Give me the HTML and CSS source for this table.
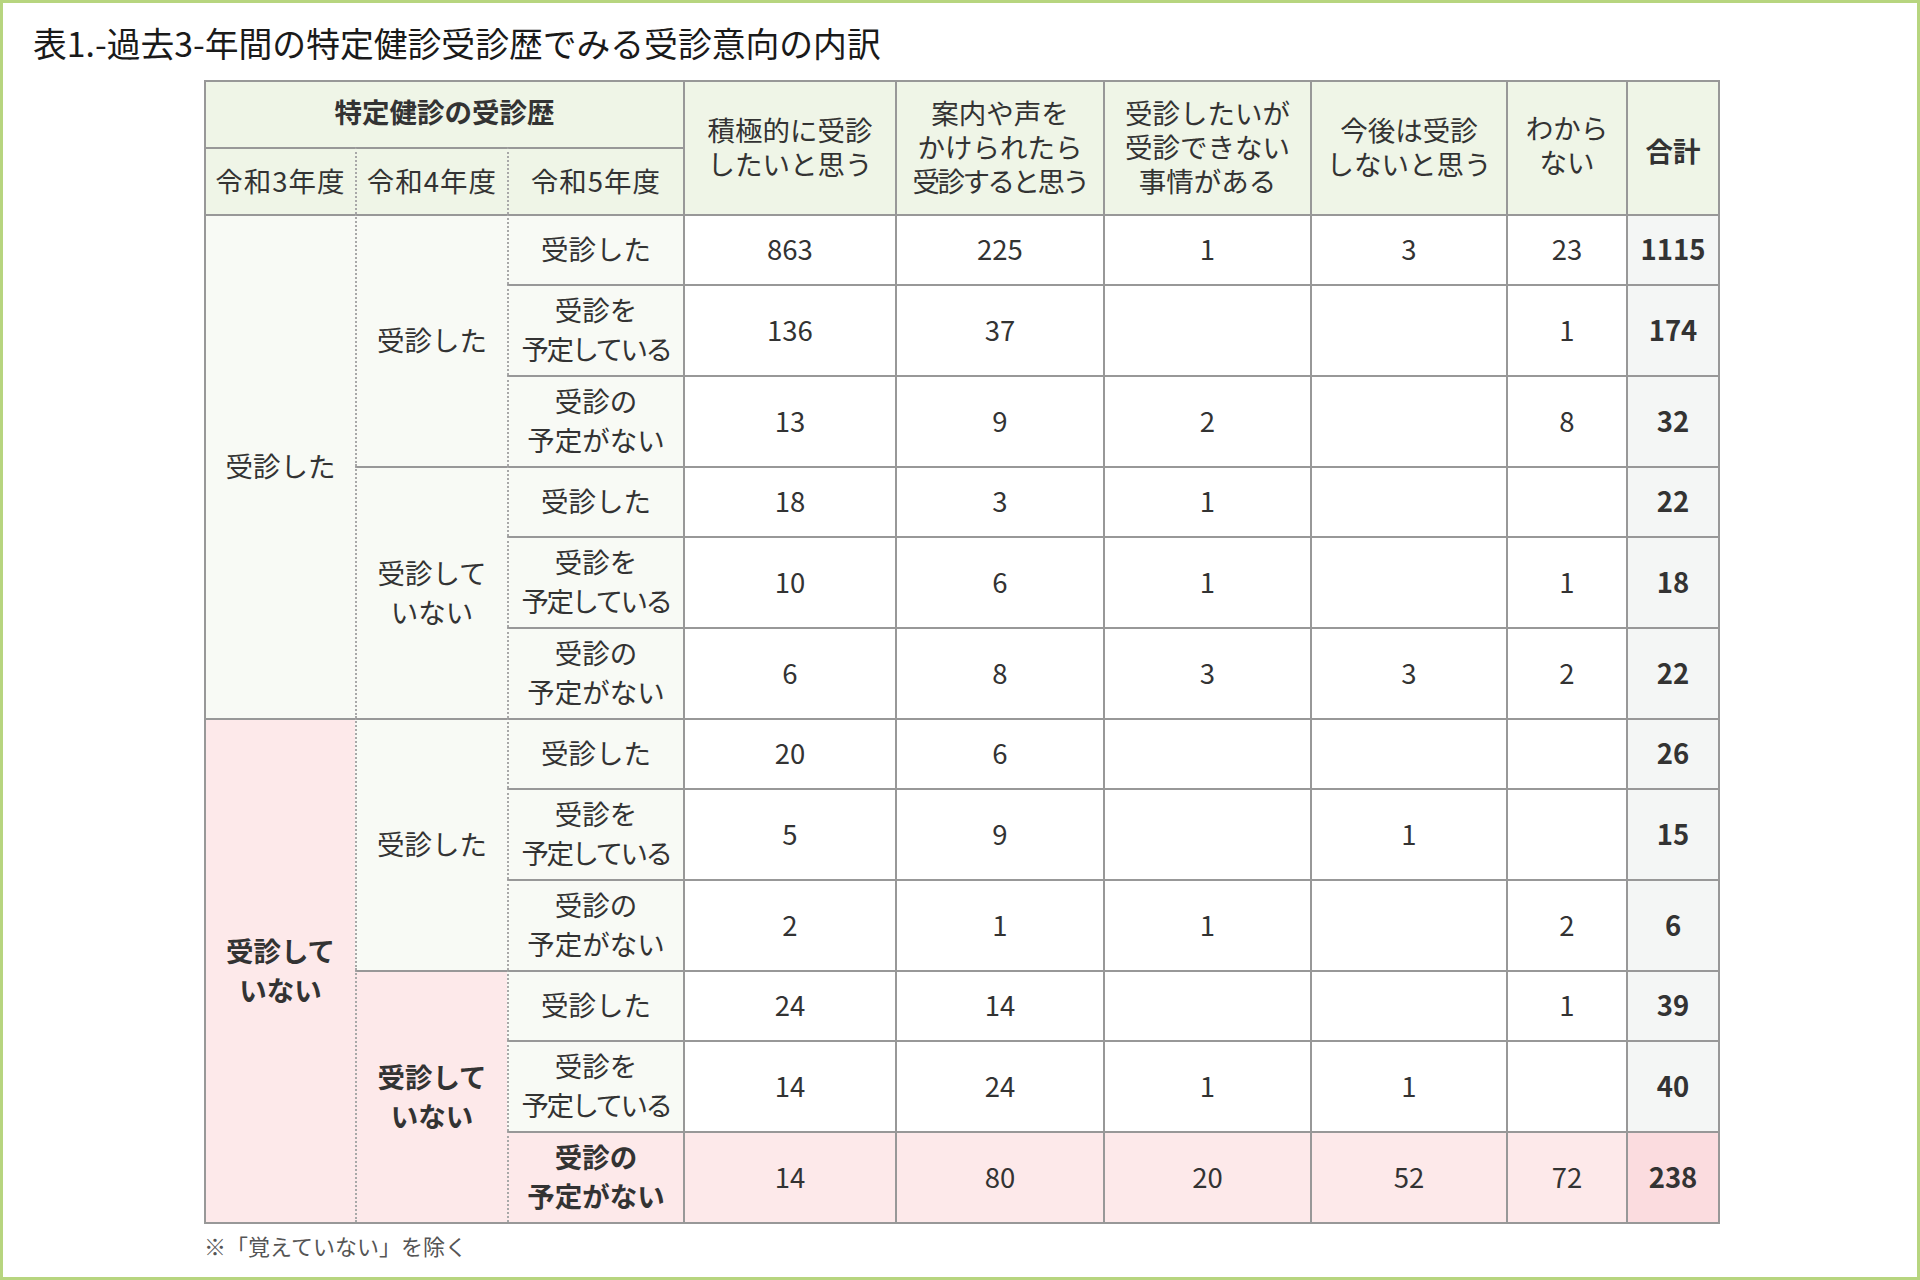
FILE: index.html
```html
<!DOCTYPE html>
<html lang="ja">
<head>
<meta charset="utf-8">
<title>表1</title>
<link rel="stylesheet" href="styles.css">
</head>
<body>
<div class="frame">
  <h1 class="title">表1.-過去3-年間の特定健診受診歴でみる受診意向の内訳</h1>
  <div class="wrap">
    <table class="tbl">
      <colgroup>
        <col class="w1"><col class="w2"><col class="w3"><col class="w4"><col class="w5"><col class="w6"><col class="w7"><col class="w8"><col class="w9">
      </colgroup>
      <thead>
        <tr class="h1">
          <th colspan="3" class="hd b hk">特定健診の受診歴</th>
          <th rowspan="2" class="hd">積極的に受診<br>したいと思う</th>
          <th rowspan="2" class="hd">案内や声を<br>かけられたら<br><span class="tight">受診すると思う</span></th>
          <th rowspan="2" class="hd">受診したいが<br>受診できない<br>事情がある</th>
          <th rowspan="2" class="hd">今後は受診<br>しないと思う</th>
          <th rowspan="2" class="hd wk">わから<br>ない</th>
          <th rowspan="2" class="hd b gk">合計</th>
        </tr>
        <tr class="h2">
          <th class="hd yr">令和3年度</th>
          <th class="hd yr dl">令和4年度</th>
          <th class="hd yr dl">令和5年度</th>
        </tr>
      </thead>
      <tbody>
        <tr class="s">
          <td rowspan="6" class="lb">受診した</td>
          <td rowspan="3" class="lb dl">受診した</td>
          <td class="lb dl">受診した</td>
          <td>863</td><td>225</td><td>1</td><td>3</td><td>23</td><td class="tot">1115</td>
        </tr>
        <tr class="d">
          <td class="lb dl">受診を<br><span class="tight">予定している</span></td>
          <td>136</td><td>37</td><td></td><td></td><td>1</td><td class="tot">174</td>
        </tr>
        <tr class="d">
          <td class="lb dl">受診の<br>予定がない</td>
          <td>13</td><td>9</td><td>2</td><td></td><td>8</td><td class="tot">32</td>
        </tr>
        <tr class="s">
          <td rowspan="3" class="lb dl">受診して<br>いない</td>
          <td class="lb dl">受診した</td>
          <td>18</td><td>3</td><td>1</td><td></td><td></td><td class="tot">22</td>
        </tr>
        <tr class="d">
          <td class="lb dl">受診を<br><span class="tight">予定している</span></td>
          <td>10</td><td>6</td><td>1</td><td></td><td>1</td><td class="tot">18</td>
        </tr>
        <tr class="d">
          <td class="lb dl">受診の<br>予定がない</td>
          <td>6</td><td>8</td><td>3</td><td>3</td><td>2</td><td class="tot">22</td>
        </tr>
        <tr class="s">
          <td rowspan="6" class="pk b">受診して<br>いない</td>
          <td rowspan="3" class="lb dl">受診した</td>
          <td class="lb dl">受診した</td>
          <td>20</td><td>6</td><td></td><td></td><td></td><td class="tot">26</td>
        </tr>
        <tr class="d">
          <td class="lb dl">受診を<br><span class="tight">予定している</span></td>
          <td>5</td><td>9</td><td></td><td>1</td><td></td><td class="tot">15</td>
        </tr>
        <tr class="d">
          <td class="lb dl">受診の<br>予定がない</td>
          <td>2</td><td>1</td><td>1</td><td></td><td>2</td><td class="tot">6</td>
        </tr>
        <tr class="s">
          <td rowspan="3" class="pk b dl">受診して<br>いない</td>
          <td class="lb dl">受診した</td>
          <td>24</td><td>14</td><td></td><td></td><td>1</td><td class="tot">39</td>
        </tr>
        <tr class="d">
          <td class="lb dl">受診を<br><span class="tight">予定している</span></td>
          <td>14</td><td>24</td><td>1</td><td>1</td><td></td><td class="tot">40</td>
        </tr>
        <tr class="d last">
          <td class="pk b dl">受診の<br>予定がない</td>
          <td class="pk">14</td><td class="pk">80</td><td class="pk">20</td><td class="pk">52</td><td class="pk">72</td><td class="pk2 b">238</td>
        </tr>
      </tbody>
    </table>
    <p class="note">※「覚えていない」を除く</p>
  </div>
</div>
</body>
</html>
```

FILE: styles.css
```css
html, body {
  margin: 0;
  padding: 0;
  background: #ffffff;
}

body {
  font-family: "Noto Sans CJK JP", "Noto Sans", sans-serif;
  color: #333333;
}

.frame {
  box-sizing: border-box;
  width: 1920px;
  height: 1280px;
  border: 3px solid #b7d57f;
  padding: 0;
}

.title {
  margin: 0;
  padding: 20px 0 0 30px;
  font-size: 33.8px;
  line-height: 40px;
  font-weight: 400;
  color: #1a1a1a;
}

.wrap {
  margin: 17px 0 0 201px;
}

.tbl {
  table-layout: fixed;
  border-collapse: separate;
  border-spacing: 0;
  width: 1516px;
  border-right: 2px solid #989898;
  border-bottom: 2px solid #989898;
}

.w1 { width: 151px; }
.w2 { width: 152px; }
.w3 { width: 176px; }
.w4 { width: 212px; }
.w5 { width: 208px; }
.w6 { width: 207px; }
.w7 { width: 196px; }
.w8 { width: 120px; }
.w9 { width: 92px; }

.tbl th,
.tbl td {
  border-left: 2px solid #989898;
  border-top: 2px solid #989898;
  padding: 0;
  text-align: center;
  vertical-align: middle;
  font-size: 27.5px;
  color: #333333;
  font-weight: 400;
}

.tbl td {
  line-height: 39px;
  padding-bottom: 3px;
}

.tbl th {
  line-height: 34px;
  padding-bottom: 4px;
}

.tbl th.hk {
  padding-bottom: 8px;
}

.tbl th.wk {
  padding-bottom: 8px;
}

.tbl th.gk {
  padding-bottom: 0;
  padding-top: 4px;
}

.tbl .dl {
  border-left: 2px dotted #a8a8a8;
}

.tight {
  letter-spacing: -2.5px;
}

.h1 { height: 67px; }
.h2 { height: 67px; }
tr.s { height: 70px; }
tr.d { height: 91px; }

.hd {
  background: #eff5e7;
}

.yr {
  letter-spacing: 1px;
}

.lb {
  background: #f8faf5;
}

.pk {
  background: #fde9ea;
}

.pk2 {
  background: #fbdcdf;
}

.tot {
  background: #f4f6f5;
  font-weight: 700 !important;
}

.b {
  font-weight: 700 !important;
}

.note {
  margin: 6px 0 0 0;
  font-size: 22px;
  line-height: 30px;
  color: #555555;
}
```
